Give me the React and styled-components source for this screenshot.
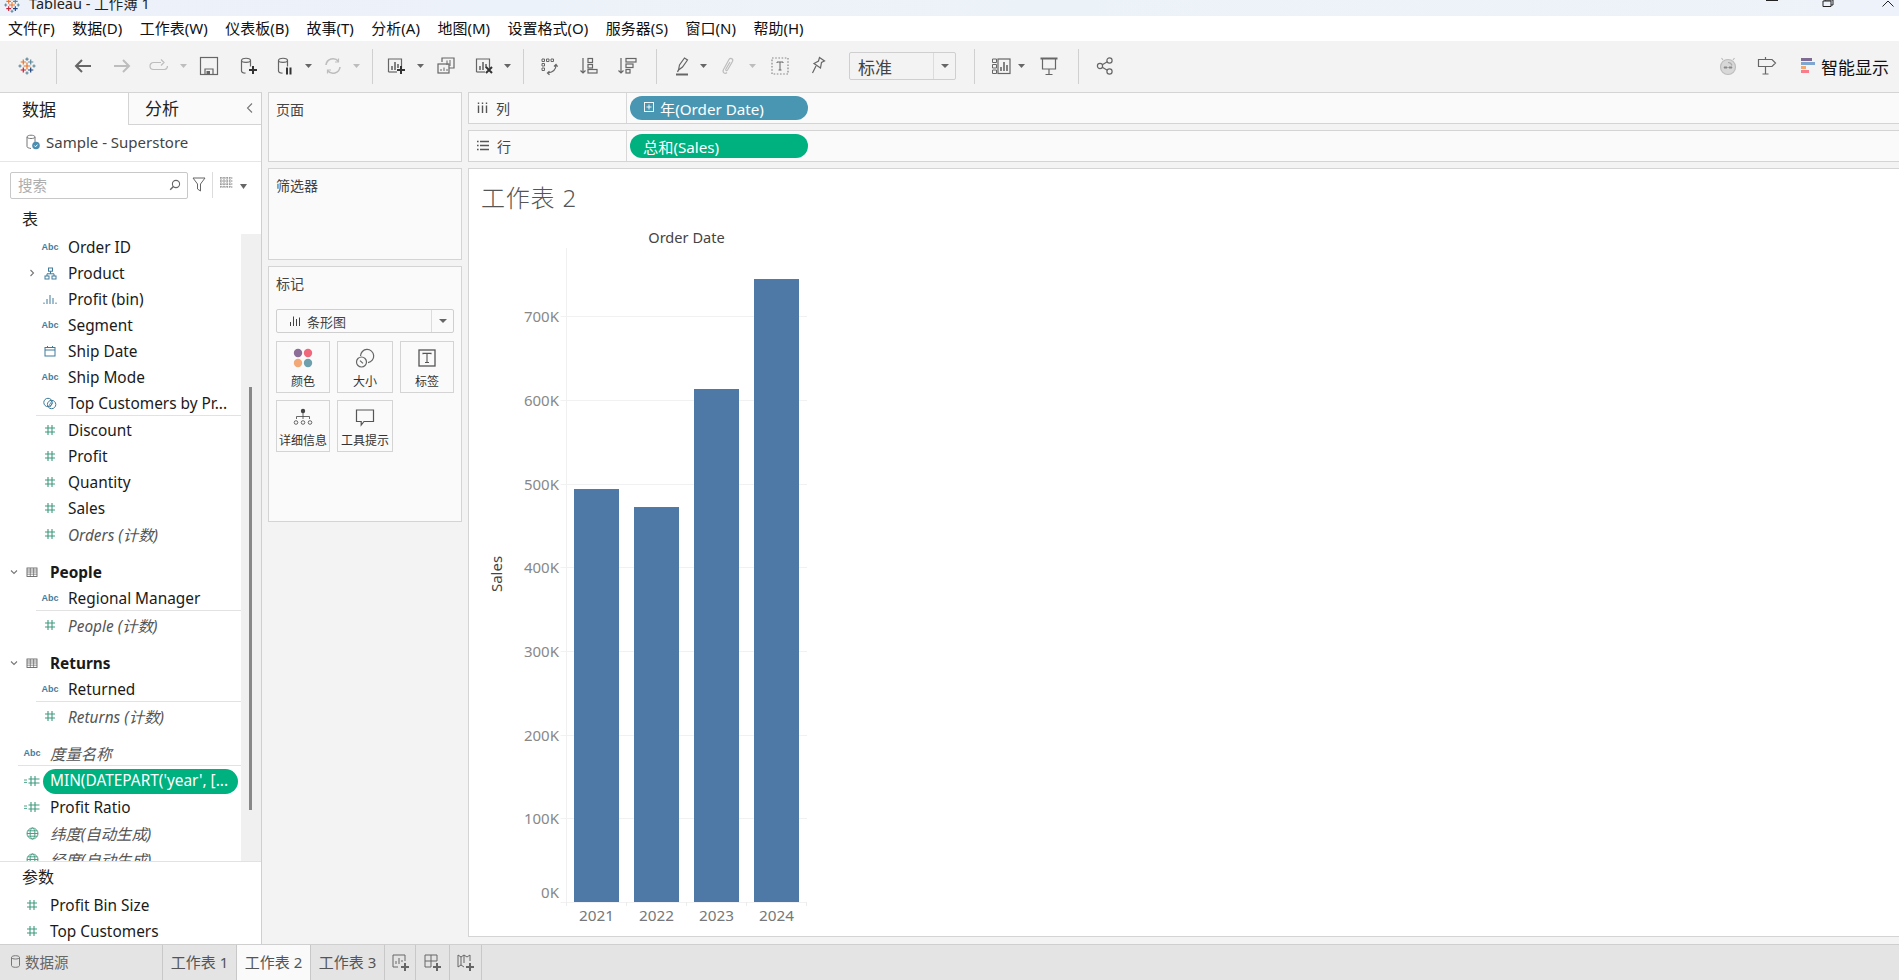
import React from 'react';
import styled, { createGlobalStyle } from 'styled-components';

const GlobalStyle = createGlobalStyle`
  html, body {
    margin: 0;
    padding: 0;
    background: #f3f3f3;
    font-family: "Noto Sans", "Noto Sans CJK SC", sans-serif;
    color: #222;
    overflow: hidden;
  }
  * { box-sizing: border-box; }
`;

const Page = styled.div`
  width: 1899px;
  height: 980px;
  display: flex;
  flex-direction: column;
  overflow: hidden;
`;

/* title + menu */
const TitleBar = styled.div`
  height: 16px;
  flex-shrink: 0;
  display: flex;
  align-items: flex-start;
  overflow: hidden;
  background: linear-gradient(90deg, #edf1fa, #ecf3f8 55%, #eef2fa);
`;

const TitleIcon = styled.svg`
  margin: -4px 0 0 3px;
  flex-shrink: 0;
`;

const TitleText = styled.div`
  margin: -9px 0 0 8px;
  font-size: 14.5px;
  line-height: 24px;
  color: #222;
`;

const WinControls = styled.div`
  margin-left: auto;
  display: flex;
  align-items: flex-start;
  color: #222;
`;

const WinButton = styled.svg`
  display: block;
  margin-left: ${p => p.$gap}px;
  margin-right: ${p => p.$end || 0}px;
`;

const MenuBar = styled.div`
  height: 25px;
  flex-shrink: 0;
  display: flex;
  align-items: center;
  gap: 17.5px;
  padding-left: 8px;
  background: #fff;
`;

const MenuItem = styled.span`
  font-size: 15px;
  line-height: 25px;
  color: #111;
  white-space: nowrap;
`;

/* toolbar */
const Toolbar = styled.div`
  height: 51px;
  flex-shrink: 0;
  display: flex;
  align-items: center;
  padding: 0 10px 1px 17px;
  background: #f3f3f3;
`;

const ToolIcon = styled.svg`
  flex-shrink: 0;
  display: block;
  margin-left: ${p => p.$ml || 0}px;
  fill: none;
  stroke: ${p => (p.$off ? '#bdbdbd' : '#666')};
  stroke-width: 1.2;
`;

const ToolCaret = styled.span`
  flex-shrink: 0;
  width: 7px;
  height: 4px;
  margin-left: ${p => p.$ml}px;
  clip-path: polygon(0 0, 100% 0, 50% 100%);
  background: ${p => (p.$off ? '#bdbdbd' : '#666')};
`;

const ToolSep = styled.span`
  flex-shrink: 0;
  width: 1px;
  height: 35px;
  margin-left: ${p => p.$ml}px;
  background: #d0d0d0;
`;

const DropSelect = styled.div`
  flex-shrink: 0;
  display: flex;
  align-items: stretch;
  width: ${p => p.$w}px;
  height: ${p => p.$h}px;
  margin-left: ${p => p.$ml || 0}px;
  border: 1px solid #cfcfcf;
  border-radius: 2px;
  background: ${p => p.$bg || '#f3f3f3'};
`;

const DropLabel = styled.div`
  flex: 1;
  display: flex;
  align-items: center;
  gap: ${p => p.$gap || 0}px;
  padding-left: ${p => p.$pad}px;
  font-size: ${p => p.$size}px;
  color: #444;
`;

const DropArrow = styled.div`
  width: ${p => p.$w}px;
  display: flex;
  align-items: center;
  justify-content: center;
  border-left: 1px solid #dcdcdc;
  &::after {
    content: '';
    border-left: 4px solid transparent;
    border-right: 4px solid transparent;
    border-top: 4.5px solid #666;
  }
`;

const ShowMeBars = styled.svg`
  margin-left: 24px;
  flex-shrink: 0;
`;

const ShowMeLabel = styled.span`
  margin-left: 6px;
  font-size: 17px;
  color: #111;
  white-space: nowrap;
`;

const ToolSpacer = styled.span`
  margin-left: auto;
`;

/* main area */
const Main = styled.div`
  flex: 1;
  min-height: 0;
  display: flex;
  background: #f3f3f3;
`;

const Sidebar = styled.aside`
  width: 262px;
  flex-shrink: 0;
  display: flex;
  flex-direction: column;
  background: #fff;
  border-top: 1px solid #d4d4d4;
  border-right: 1px solid #cfcfcf;
`;

const SideTabs = styled.div`
  height: 32px;
  flex-shrink: 0;
  display: flex;
`;

const SideTab = styled.div`
  display: flex;
  align-items: center;
  font-size: 17px;
  color: #222;
  width: ${p => (p.$active ? '128px' : 'auto')};
  flex: ${p => (p.$active ? 'none' : 1)};
  padding-left: ${p => (p.$active ? 22 : 16)}px;
  padding-bottom: 2px;
  border-left: ${p => (p.$active ? 'none' : '1px solid #d4d4d4')};
  border-bottom: ${p => (p.$active ? 'none' : '1px solid #d4d4d4')};
  background: ${p => (p.$active ? '#fff' : '#fafafa')};
`;

const TabChevron = styled.svg`
  margin-left: auto;
  margin-right: 7px;
`;

const SourceRow = styled.div`
  height: 37px;
  flex-shrink: 0;
  display: flex;
  align-items: center;
  gap: 6px;
  padding: 0 0 2px 26px;
  font-size: 15px;
  color: #444;
  border-bottom: 1px solid #e6e6e6;
`;

const SearchRow = styled.div`
  height: 43px;
  flex-shrink: 0;
  display: flex;
  align-items: flex-start;
  padding: 10px 0 0 10px;
`;

const SearchBox = styled.div`
  width: 178px;
  height: 27px;
  display: flex;
  align-items: center;
  justify-content: space-between;
  padding: 0 6px 2px 7px;
  font-size: 14.5px;
  color: #adadad;
  border: 1px solid #c8c8c8;
  border-radius: 2px;
`;

const SearchTool = styled.svg`
  margin: 5px 0 0 ${p => p.$ml}px;
  flex-shrink: 0;
`;

const SearchDivider = styled.span`
  width: 1px;
  height: 26px;
  margin-left: 6px;
  background: #dcdcdc;
`;

const SearchCaret = styled.span`
  width: 7px;
  height: 5px;
  margin: 12px 0 0 7px;
  clip-path: polygon(0 0, 100% 0, 50% 100%);
  background: #666;
`;

const SectionHeading = styled.div`
  height: ${p => p.$h}px;
  flex-shrink: 0;
  display: flex;
  align-items: center;
  padding: 0 0 ${p => p.$pb || 0}px 22px;
  font-size: 16px;
  color: #222;
`;

const ScrollArea = styled.div`
  flex: 1;
  min-height: 0;
  display: flex;
  overflow: hidden;
`;

const FieldList = styled.div`
  flex: 1;
  min-width: 0;
  overflow: hidden;
`;

const ScrollTrack = styled.div`
  width: 20px;
  flex-shrink: 0;
  display: flex;
  justify-content: center;
  background: #f0f0f0;
`;

const ScrollThumb = styled.div`
  width: 3px;
  height: 423px;
  margin-top: 153px;
  margin-right: 1px;
  background: #888;
`;

const FieldRow = styled.div`
  height: 26px;
  display: flex;
  align-items: center;
  padding-left: ${p => 8 + p.$level * 18}px;
  margin-top: ${p => p.$top || 0}px;
  white-space: nowrap;
`;

const ExpandSlot = styled.span`
  width: 12px;
  flex-shrink: 0;
  display: flex;
  align-items: center;
  justify-content: center;
`;

const IconSlot = styled.span`
  width: 24px;
  flex-shrink: 0;
  display: flex;
  align-items: center;
  justify-content: center;
`;

const AbcMark = styled.span`
  font-family: "Liberation Sans", sans-serif;
  font-size: 9px;
  font-weight: 700;
  color: #467c9c;
`;

const FieldName = styled.span`
  margin-left: 6px;
  font-size: 15.4px;
  color: ${p => (p.$italic ? '#555' : '#1a1a1a')};
  font-style: ${p => (p.$italic ? 'italic' : 'normal')};
  font-weight: ${p => (p.$bold ? 700 : 400)};
`;

const FieldPill = styled.span`
  flex: 1;
  height: 25px;
  display: flex;
  align-items: center;
  margin-right: 3px;
  margin-left: -1px;
  padding: 0 0 1px 7px;
  border-radius: 13px;
  font-size: 15.4px;
  color: #fff;
  background: #00b180;
`;

const FieldDivider = styled.div`
  height: 1px;
  margin: -1px 0 ${p => p.$after}px ${p => p.$left}px;
  background: #e2e2e2;
`;

const ParamsPanel = styled.div`
  height: 83px;
  flex-shrink: 0;
  border-top: 1px solid #e2e2e2;
`;

/* pages / filters / marks */
const CardColumn = styled.div`
  width: 194px;
  flex-shrink: 0;
  margin-left: 6px;
  display: flex;
  flex-direction: column;
  gap: 6px;
`;

const Card = styled.section`
  height: ${p => p.$h}px;
  padding: 7px 7px;
  background: #fafafa;
  border: 1px solid #d4d4d4;
`;

const CardTitle = styled.div`
  font-size: 14px;
  line-height: 20px;
  color: #444;
`;

const MarksType = styled.div`
  margin-top: 15px;
`;

const MarksGrid = styled.div`
  display: grid;
  grid-template-columns: 54px 56px 54px;
  grid-auto-rows: 52px;
  gap: 7px;
  margin-top: 8px;
`;

const MarkButton = styled.div`
  display: flex;
  flex-direction: column;
  align-items: center;
  justify-content: flex-end;
  padding-bottom: 2px;
  gap: 6px;
  font-size: 12px;
  line-height: 16px;
  color: #333;
  white-space: nowrap;
  border: 1px solid #d4d4d4;
  background: #fafafa;
`;

/* shelves + view */
const Workspace = styled.div`
  flex: 1;
  min-width: 0;
  margin-left: 6px;
  display: flex;
  flex-direction: column;
  gap: 6px;
  padding-bottom: 7px;
`;

const Shelf = styled.div`
  height: 32px;
  flex-shrink: 0;
  display: flex;
  align-items: center;
  background: #fafafa;
  border-top: 1px solid #d4d4d4;
  border-bottom: 1px solid #d4d4d4;
  border-left: 1px solid #d4d4d4;
`;

const ShelfLabel = styled.div`
  width: 158px;
  height: 100%;
  flex-shrink: 0;
  display: flex;
  align-items: center;
  gap: 8px;
  padding: 0 0 1px 8px;
  font-size: 14px;
  color: #444;
  border-right: 1px solid #d8d8d8;
`;

const ShelfPill = styled.div`
  width: 178px;
  height: 24px;
  margin-left: 3px;
  display: flex;
  align-items: center;
  gap: 5px;
  padding: 0 0 1px ${p => p.$pad}px;
  font-size: 15.2px;
  color: #fff;
  border-radius: 12px;
  background: ${p => p.$color};
`;

const ViewPanel = styled.div`
  flex: 1;
  min-height: 0;
  background: #fff;
  border-top: 1px solid #d4d4d4;
  border-bottom: 1px solid #d4d4d4;
  border-left: 1px solid #d4d4d4;
`;

const SheetTitle = styled.h1`
  margin: 0;
  height: 56px;
  padding: 12px 0 0 12px;
  font-size: 24px;
  line-height: 34px;
  font-weight: 300;
  letter-spacing: 0.8px;
  color: #555;
`;

const ChartSvg = styled.svg`
  display: block;
  margin-left: 11px;
`;

const ChartLabel = styled.text`
  font-family: "Noto Sans", sans-serif;
  font-size: ${p => p.$size}px;
  fill: ${p => p.$color};
`;

/* sheet tabs */
const BottomBar = styled.div`
  height: 36px;
  flex-shrink: 0;
  display: flex;
  background: #e4e4e4;
  border-top: 1px solid #cfcfcf;
`;

const SourceTab = styled.div`
  width: 163px;
  display: flex;
  align-items: center;
  gap: 5px;
  padding: 0 0 2px 11px;
  font-size: 14.5px;
  color: #666;
  border-right: 1px solid #c8c8c8;
`;

const SheetTab = styled.div`
  width: 74px;
  display: flex;
  align-items: center;
  justify-content: center;
  padding-bottom: 2px;
  font-size: 15px;
  color: #555;
  background: ${p => (p.$active ? '#fafafa' : 'transparent')};
  border-right: 1px solid #c8c8c8;
`;

const NewTab = styled.div`
  width: ${p => p.$w}px;
  display: flex;
  align-items: center;
  justify-content: center;
  border-right: 1px solid #c8c8c8;
`;

/* drawings */
const Tool = ({ ml, off, children }) => (
  <ToolIcon width="20" height="20" viewBox="0 0 20 20" $ml={ml} $off={off}>{children}</ToolIcon>
);

const plus = <path d="M11 16h8M15 12v8" stroke="#333" strokeWidth="2" transform="translate(0 -2)" />;

const logoMarks = [
  [-3.7, -4, 2.6, '#e8762c'], [3.7, -4, 2.6, '#5b879b'], [0, -6.8, 1.6, '#5b879b'],
  [0, 0, 3.4, '#e8762c'], [-7, 0, 1.6, '#5b879b'], [7, 0, 1.6, '#5b879b'],
  [-3.7, 4, 2.6, '#c72037'], [3.7, 4, 2.6, '#1f447e'], [0, 7, 1.6, '#5b879b'],
];

const Logo = () => (
  <g>
    {logoMarks.map(([x, y, r, c], i) => (
      <path key={i} d={`M${10 + x - r} ${10 + y}h${r * 2}M${10 + x} ${10 + y - r}v${r * 2}`} stroke={c} strokeWidth="1.2" fill="none" />
    ))}
  </g>
);

const barsInFrame = (
  <>
    <path d="M2.5 16V3h13v9" />
    <path d="M2.5 16H11" />
    <path d="M6 14V10M9 14V6M12 12V8" strokeWidth="1.6" />
  </>
);

const Cylinder = () => (
  <path d="M3.5 4.5c0-3 9-3 9 0v6M3.5 4.5c0 2.4 9 2.4 9 0M3.5 4.5V15c0 1.3 1.6 2 4 2.2" />
);

const Hash = () => (
  <svg width="12" height="12" viewBox="0 0 12 12" fill="none" stroke="#3f9a7e" strokeWidth="1.1">
    <path d="M4 1v10M8 1v10M1 4h10M1 8h10" />
  </svg>
);

const CalcHash = () => (
  <svg width="16" height="12" viewBox="0 0 16 12" fill="none" stroke="#3f9a7e" strokeWidth="1.1">
    <path d="M7 1v10M11 1v10M4.5 4h11M4.5 8h11" />
    <path d="M0 5h3M0 7.4h3" strokeWidth="0.9" />
  </svg>
);

const TableIcon = () => (
  <svg width="12" height="12" viewBox="0 0 12 12" fill="none" stroke="#666" strokeWidth="0.9">
    <rect x="1" y="2" width="10" height="8.5" />
    <path d="M1 4h10M1 6h10M1 8.2h10M4.3 2v8.5M7.6 2v8.5" strokeWidth="0.7" />
  </svg>
);

const Globe = () => (
  <svg width="13" height="13" viewBox="0 0 13 13" fill="none" stroke="#4c9f86" strokeWidth="1">
    <circle cx="6.5" cy="6.5" r="5.5" />
    <ellipse cx="6.5" cy="6.5" rx="2.4" ry="5.5" />
    <path d="M1 6.5h11M1.8 3.8h9.4M1.8 9.2h9.4" />
  </svg>
);

const Hierarchy = () => (
  <svg width="13" height="13" viewBox="0 0 13 13" fill="none" stroke="#3f7a9a" strokeWidth="1">
    <rect x="4.5" y="1" width="4" height="3.2" />
    <rect x="1" y="9" width="4" height="3" />
    <rect x="8" y="9" width="4" height="3" />
    <path d="M6.5 4.2v2.6M3 9V6.8h7V9" />
  </svg>
);

const BinBars = () => (
  <svg width="14" height="12" viewBox="0 0 14 12" fill="none" stroke="#3f7a9a" strokeWidth="1">
    <path d="M1 11V9.5M4 11V6M7 11V2M10 11V5M13 11V9.5" />
  </svg>
);

const Calendar = () => (
  <svg width="12" height="12" viewBox="0 0 12 12" fill="none" stroke="#3f7a9a" strokeWidth="1">
    <rect x="1" y="2.5" width="10" height="8.5" />
    <path d="M1 5h10M3.5 1v2M8.5 1v2" />
  </svg>
);

const Overlap = () => (
  <svg width="14" height="13" viewBox="0 0 14 13" fill="none" stroke="#3f7a9a" strokeWidth="1">
    <circle cx="5" cy="5.5" r="4.2" />
    <circle cx="8.6" cy="7.5" r="4.2" />
    <path d="M5.5 9.5l3.4-5.6M7 10l2.6-4.4" strokeWidth="0.8" />
  </svg>
);

const Chevron = ({ down }) => (
  <svg width="8" height="8" viewBox="0 0 8 8" fill="none" stroke="#777" strokeWidth="1.1">
    <path d={down ? 'M1 2.5l3 3 3-3' : 'M2.5 1l3 3-3 3'} />
  </svg>
);

const icons = {
  abc: <AbcMark>Abc</AbcMark>,
  hash: <Hash />,
  calc: <CalcHash />,
  globe: <Globe />,
  hier: <Hierarchy />,
  bins: <BinBars />,
  cal: <Calendar />,
  set: <Overlap />,
  table: <TableIcon />,
};

const Field = ({ level = 1, icon, name, italic, bold, top, expand, pill }) => (
  <FieldRow $level={level} $top={top}>
    <ExpandSlot>{expand && <Chevron down={expand === 'down'} />}</ExpandSlot>
    <IconSlot>{icons[icon]}</IconSlot>
    {pill ? <FieldPill>{name}</FieldPill> : <FieldName $italic={italic} $bold={bold}>{name}</FieldName>}
  </FieldRow>
);

const menus = ['文件(F)', '数据(D)', '工作表(W)', '仪表板(B)', '故事(T)', '分析(A)', '地图(M)', '设置格式(O)', '服务器(S)', '窗口(N)', '帮助(H)'];

const markButtons = [
  {
    label: '颜色',
    icon: (
      <svg width="20" height="20" viewBox="0 0 20 20">
        <circle cx="5" cy="5" r="4.2" fill="#8c6d97" />
        <circle cx="15" cy="5" r="4.2" fill="#f0687c" />
        <circle cx="5" cy="15" r="4.2" fill="#f2a877" />
        <circle cx="15" cy="15" r="4.2" fill="#6e9fad" />
      </svg>
    ),
  },
  {
    label: '大小',
    icon: (
      <svg width="20" height="20" viewBox="0 0 20 20" fill="none" stroke="#666" strokeWidth="1.2">
        <path d="M5.5 8A6.6 6.6 0 1 1 13 14.6" />
        <circle cx="6.5" cy="14" r="5" />
        <path d="M5 12.6l3 2.8" />
      </svg>
    ),
  },
  {
    label: '标签',
    icon: (
      <svg width="20" height="20" viewBox="0 0 20 20" fill="none" stroke="#555" strokeWidth="1.3">
        <rect x="2" y="2" width="16" height="16" />
        <path d="M6 6.2V5.4h8v.8M10 5.4v9M8 14.5h4" strokeWidth="1.1" />
      </svg>
    ),
  },
  {
    label: '详细信息',
    icon: (
      <svg width="20" height="20" viewBox="0 0 20 20" fill="#444" stroke="#444" strokeWidth="0.8">
        <circle cx="10" cy="4" r="2.2" stroke="none" />
        <path d="M10 6v6M3.5 12V9.5h13V12" fill="none" />
        <circle cx="3" cy="15.5" r="1.8" fill="none" />
        <circle cx="10" cy="15.5" r="1.8" fill="none" />
        <circle cx="17" cy="15.5" r="1.8" fill="none" />
      </svg>
    ),
  },
  {
    label: '工具提示',
    icon: (
      <svg width="20" height="20" viewBox="0 0 20 20" fill="none" stroke="#555" strokeWidth="1.2">
        <path d="M1.5 3h17v11.5H9L6.2 18v-3.5H1.5z" />
      </svg>
    ),
  },
];

const chart = {
  axisX: 86.5,
  baseY: 677,
  unit: 83.7, // px per 100K
  rows: [
    { year: 2021, sales: 493.4 },
    { year: 2022, sales: 471.9 },
    { year: 2023, sales: 612.9 },
    { year: 2024, sales: 744.3 },
  ],
};

const SalesChart = () => {
  const { axisX, baseY, unit, rows } = chart;
  const ticks = [0, 100, 200, 300, 400, 500, 600, 700];
  return (
    <ChartSvg width="345" height="705" viewBox="0 0 345 705">
      <ChartLabel x="206.5" y="18" textAnchor="middle" $size={14.6} $color="#444">Order Date</ChartLabel>
      <path d={`M${axisX} 23V${baseY + 4}`} stroke="#f0f0f0" fill="none" />
      {ticks.map(t => {
        const y = Math.round(baseY - (t * unit) / 100) + 0.5;
        // the 0K label sits above its line, as in the view
        const labelY = t === 0 ? y - 5 : y + 5;
        return (
          <g key={t}>
            <path d={`M${axisX - 6} ${y}H327`} stroke="#f1f1f1" fill="none" />
            <ChartLabel x="79" y={labelY} textAnchor="end" $size={15} $color="#888">{t}K</ChartLabel>
          </g>
        );
      })}
      {rows.map((r, i) => {
        const h = (r.sales * unit) / 100;
        return (
          <g key={r.year}>
            <rect x={94 + i * 60} y={baseY - h} width="45" height={h} fill="#4e78a6" />
            <path d={`M${axisX + i * 60} ${baseY}v4`} stroke="#ececec" />
            <ChartLabel x={116.5 + i * 60} y={696} textAnchor="middle" $size={15.3} $color="#777">{r.year}</ChartLabel>
          </g>
        );
      })}
      <path d={`M${axisX + 240} ${baseY}v4`} stroke="#ececec" />
      <ChartLabel transform="translate(22 349) rotate(-90)" textAnchor="middle" $size={15} $color="#444">Sales</ChartLabel>
    </ChartSvg>
  );
};

export default function App() {
  return (
    <Page>
      <GlobalStyle />
      <TitleBar>
        <TitleIcon width="18" height="18" viewBox="0 0 20 20"><Logo /></TitleIcon>
        <TitleText>Tableau - 工作簿 1</TitleText>
        <WinControls>
          <WinButton width="12" height="4" viewBox="0 0 12 4" $gap={0}>
            <path d="M0 0.5h12" stroke="#222" fill="none" />
          </WinButton>
          <WinButton width="12" height="7" viewBox="0 0 12 7" $gap={44}>
            <path d="M3 0v1H1v5.5h8V1H3M3 0h8v5H9" stroke="#222" fill="none" />
          </WinButton>
          <WinButton width="12" height="7" viewBox="0 0 12 7" $gap={48} $end={5}>
            <path d="M0.5 6.5L6 1l5.5 5.5" stroke="#222" fill="none" />
          </WinButton>
        </WinControls>
      </TitleBar>

      <MenuBar>
        {menus.map(m => <MenuItem key={m}>{m}</MenuItem>)}
      </MenuBar>

      <Toolbar>
        <ToolIcon width="20" height="20" viewBox="0 0 20 20"><Logo /></ToolIcon>
        <ToolSep $ml={19} />
        <Tool ml={16}><path d="M18 10H3M9 4l-6 6 6 6" strokeWidth="2" /></Tool>
        <Tool ml={19} off><path d="M2 10h15M11 4l6 6-6 6" strokeWidth="2" /></Tool>
        <Tool ml={17} off><path d="M12 6.5H4.5a3.5 3.5 0 0 0 0 7h11a3.5 3.5 0 0 0 3-3.5M12 3.5l3 3-3 3" /></Tool>
        <ToolCaret $ml={11} $off />
        <Tool ml={12}>
          <rect x="1.5" y="1.5" width="17" height="17" />
          <path d="M6 18.5v-5.5h8v5.5" />
          <rect x="7.5" y="15" width="3.5" height="3.5" fill="#666" stroke="none" />
        </Tool>
        <Tool ml={19}><Cylinder />{plus}</Tool>
        <Tool ml={17}>
          <Cylinder />
          <path d="M12 11.5v7M15.5 11.5v7" stroke="#333" strokeWidth="2" />
        </Tool>
        <ToolCaret $ml={10} />
        <Tool ml={11} off>
          <path d="M3 9a7 7 0 0 1 12.5-3.5M17 11a7 7 0 0 1-12.5 3.5" strokeWidth="1.6" />
          <path d="M15.5 2.5v3.5h-3.5M4.5 17.5V14h3.5" />
        </Tool>
        <ToolCaret $ml={10} $off />
        <ToolSep $ml={12} />
        <Tool ml={13}>{barsInFrame}{plus}</Tool>
        <ToolCaret $ml={11} />
        <Tool ml={12}>
          <path d="M6 6V2h12v10h-5" />
          <rect x="2" y="8" width="11" height="9" />
          <path d="M5 15v-2M8 15v-3.5M11 15v-2M11 9V4.5M14 10V4" strokeWidth="1" />
        </Tool>
        <Tool ml={18}>
          {barsInFrame}
          <path d="M12 11l6 6M18 11l-6 6" stroke="#333" strokeWidth="2" />
        </Tool>
        <ToolCaret $ml={10} />
        <ToolSep $ml={12} />
        <Tool ml={15}>
          <path d="M3 3h2.5v2.5H3zM7.5 3H10v2.5H7.5zM12 3h2.5v2.5H12zM3 7.5h2.5V10H3zM3 12h2.5v2.5H3z" strokeWidth="1" />
          <path d="M17 9c0 4-2.5 7-8 8M15 10.5L17 8.5l1.6 2.2M10.5 15.2L8.5 17l2 1.8" />
        </Tool>
        <Tool ml={20}>
          <path d="M4 2v15M1.5 14.5L4 17l2.5-2.5" />
          <rect x="9" y="2.5" width="4.5" height="4" />
          <rect x="9" y="8.5" width="4.5" height="3.5" />
          <rect x="9" y="13.5" width="9" height="3.5" />
        </Tool>
        <Tool ml={18}>
          <path d="M4 2v15M1.5 14.5L4 17l2.5-2.5" />
          <rect x="9" y="2.5" width="10" height="3.5" />
          <rect x="9" y="8" width="7" height="3.5" />
          <rect x="9" y="13.5" width="4" height="3.5" />
        </Tool>
        <ToolSep $ml={19} />
        <Tool ml={16}>
          <path d="M5.5 14l1-5 5-7 3 2-5 7z" />
          <path d="M3 18.5h12" strokeWidth="2" />
          <path d="M5.5 14l-1 2" />
        </Tool>
        <ToolCaret $ml={7} />
        <Tool ml={12} off>
          <path d="M8 16.5c-2 2-5 0-3.5-3L10 3.5c1.2-2 4.5-.8 3.6 1.8L8.5 14c-.8 1.2-2.2.4-1.7-.8L11 6" />
        </Tool>
        <ToolCaret $ml={10} $off />
        <Tool ml={14}>
          <rect x="2" y="2" width="16" height="16" strokeDasharray="1.6 1.6" stroke="#888" />
          <path d="M7 7V6h6v1M10 6v8M8.5 14h3" strokeWidth="1" />
        </Tool>
        <Tool ml={18}>
          <path d="M11.5 1.5l5 3.5-3 1.5-1 5.5-6.5-4.5 4.5-2.5zM8 10l-3.5 7" />
        </Tool>
        <DropSelect $w={107} $h={28} $ml={21}>
          <DropLabel $pad={8} $size={17}>标准</DropLabel>
          <DropArrow $w={22} />
        </DropSelect>
        <ToolSep $ml={18} />
        <Tool ml={16}>
          <path d="M1.5 3h4v3.5h-4zM1.5 8.5h4V12h-4zM1.5 14h4v3.5h-4z" strokeWidth="1" />
          <rect x="7" y="3" width="12" height="14.5" />
          <path d="M10 15v-4M13 15V6M16 15V9" strokeWidth="1.6" />
        </Tool>
        <ToolCaret $ml={7} />
        <Tool ml={14}>
          <path d="M1.5 2.5h17" strokeWidth="2" />
          <path d="M3.5 3v10h13V3M10 13v5M6.5 18.5h7" />
        </Tool>
        <ToolSep $ml={19} />
        <Tool ml={16}>
          <circle cx="5" cy="10" r="2.6" />
          <circle cx="14.5" cy="4.5" r="2.6" />
          <circle cx="14.5" cy="15.5" r="2.6" />
          <path d="M7.3 8.7l5-2.9M7.3 11.3l5 2.9" />
        </Tool>
        <ToolSpacer />
        <Tool off>
          <circle cx="10" cy="11" r="7.5" fill="#d8d8d8" />
          <path d="M5 4L3.5 2M15 4l1.5-2" />
          <path d="M5.5 11.5h9M10 6.5a4 4 0 0 1 4 3" stroke="#aaa" />
          <rect x="6" y="10.5" width="3" height="2" fill="#888" stroke="none" />
          <rect x="11" y="10.5" width="3" height="2" fill="#888" stroke="none" />
        </Tool>
        <Tool ml={19}>
          <path d="M1.5 3.5H15l3.5 3.5-3.5 3.5H1.5zM8.5 1v2.5M8.5 10.5V18M5.5 18h6" />
        </Tool>
        <ShowMeBars width="14" height="16" viewBox="0 0 14 16">
          <rect x="0" y="0" width="11" height="3" fill="#7f6a93" />
          <rect x="0" y="4" width="14" height="3" fill="#7fa6cf" />
          <rect x="0" y="8" width="5" height="3" fill="#f4a66c" />
          <rect x="0" y="12" width="8" height="3" fill="#f87c8c" />
        </ShowMeBars>
        <ShowMeLabel>智能显示</ShowMeLabel>
      </Toolbar>

      <Main>
        <Sidebar>
          <SideTabs>
            <SideTab $active>数据</SideTab>
            <SideTab>
              分析
              <TabChevron width="8" height="12" viewBox="0 0 8 12" fill="none" stroke="#777" strokeWidth="1.1">
                <path d="M6 1.5L1.5 6 6 10.5" />
              </TabChevron>
            </SideTab>
          </SideTabs>
          <SourceRow>
            <svg width="14" height="16" viewBox="0 0 14 16" fill="none" stroke="#777" strokeWidth="1">
              <path d="M1 3c0-2.4 8-2.4 8 0v5M1 3c0 2 8 2 8 0M1 3v9.5C1 13.6 2.5 14 5 14.5" />
              <circle cx="10" cy="11.5" r="3.8" fill="#4a8db0" stroke="none" />
              <path d="M8.3 11.5l1.2 1.3 2-2.2" stroke="#fff" />
            </svg>
            Sample - Superstore
          </SourceRow>
          <SearchRow>
            <SearchBox>
              搜索
              <svg width="12" height="12" viewBox="0 0 12 12" fill="none" stroke="#666" strokeWidth="1.1">
                <circle cx="7" cy="5" r="3.6" />
                <path d="M4.4 7.6L1.2 10.8" strokeWidth="1.4" />
              </svg>
            </SearchBox>
            <SearchTool width="14" height="15" viewBox="0 0 14 15" fill="none" stroke="#666" strokeWidth="1" $ml={4}>
              <path d="M1 1h12L8.5 7v7l-3-2V7z" />
            </SearchTool>
            <SearchDivider />
            <SearchTool width="13" height="12" viewBox="0 0 13 12" fill="none" stroke="#666" strokeWidth="0.8" $ml={7}>
              <path d="M0 1h13M0 4h13M0 7h13M0 10h13M1 0v11M4 0v11M7 0v11M10 0v11" strokeDasharray="1.4 0.8" />
            </SearchTool>
            <SearchCaret />
          </SearchRow>
          <SectionHeading $h={29} $pb={4}>表</SectionHeading>
          <ScrollArea>
            <FieldList>
              <Field icon="abc" name="Order ID" />
              <Field icon="hier" name="Product" expand="right" />
              <Field icon="bins" name="Profit (bin)" />
              <Field icon="abc" name="Segment" />
              <Field icon="cal" name="Ship Date" />
              <Field icon="abc" name="Ship Mode" />
              <Field icon="set" name="Top Customers by Pr..." />
              <FieldDivider $left={36} $after={1} />
              <Field icon="hash" name="Discount" />
              <Field icon="hash" name="Profit" />
              <Field icon="hash" name="Quantity" />
              <Field icon="hash" name="Sales" />
              <Field icon="hash" name="Orders (计数)" italic />

              <Field level={0} icon="table" name="People" bold expand="down" top={12} />
              <Field icon="abc" name="Regional Manager" />
              <FieldDivider $left={36} $after={1} />
              <Field icon="hash" name="People (计数)" italic />

              <Field level={0} icon="table" name="Returns" bold expand="down" top={12} />
              <Field icon="abc" name="Returned" />
              <FieldDivider $left={36} $after={1} />
              <Field icon="hash" name="Returns (计数)" italic />

              <Field level={0} icon="abc" name="度量名称" italic top={11} />
              <FieldDivider $left={18} $after={2} />
              <Field level={0} icon="calc" name="MIN(DATEPART('year', [..." pill />
              <Field level={0} icon="calc" name="Profit Ratio" />
              <Field level={0} icon="globe" name="纬度(自动生成)" italic />
              <Field level={0} icon="globe" name="经度(自动生成)" italic />
            </FieldList>
            <ScrollTrack><ScrollThumb /></ScrollTrack>
          </ScrollArea>
          <ParamsPanel>
            <SectionHeading $h={30} $pb={2}>参数</SectionHeading>
            <Field level={0} icon="hash" name="Profit Bin Size" />
            <Field level={0} icon="hash" name="Top Customers" />
          </ParamsPanel>
        </Sidebar>

        <CardColumn>
          <Card $h={70}><CardTitle>页面</CardTitle></Card>
          <Card $h={92}><CardTitle>筛选器</CardTitle></Card>
          <Card $h={256}>
            <CardTitle>标记</CardTitle>
            <MarksType>
              <DropSelect $w={178} $h={24} $bg="#fafafa">
                <DropLabel $pad={12} $size={13} $gap={6}>
                  <svg width="12" height="12" viewBox="0 0 12 12" fill="none" stroke="#444" strokeWidth="1">
                    <path d="M1.5 11V7M4.5 11V1.5M7.5 11V4M10.5 11V2.5" />
                  </svg>
                  条形图
                </DropLabel>
                <DropArrow $w={22} />
              </DropSelect>
            </MarksType>
            <MarksGrid>
              {markButtons.map(b => (
                <MarkButton key={b.label}>{b.icon}{b.label}</MarkButton>
              ))}
            </MarksGrid>
          </Card>
        </CardColumn>

        <Workspace>
          <Shelf>
            <ShelfLabel>
              <svg width="11" height="11" viewBox="0 0 11 11" fill="none" stroke="#555" strokeWidth="1.4">
                <path d="M1.5 3.5V11M5.5 3.5V11M9.5 3.5V11M1.5 0.5v1.5M5.5 0.5v1.5M9.5 0.5v1.5" />
              </svg>
              列
            </ShelfLabel>
            <ShelfPill $color="#4996b2" $pad={14}>
              <svg width="11" height="11" viewBox="0 0 11 11" fill="none" stroke="#fff" strokeWidth="0.9">
                <rect x="0.5" y="0.5" width="9" height="9" />
                <path d="M2.5 5h5M5 2.5v5" />
              </svg>
              年(Order Date)
            </ShelfPill>
          </Shelf>
          <Shelf>
            <ShelfLabel>
              <svg width="12" height="11" viewBox="0 0 12 11" fill="none" stroke="#555" strokeWidth="1.4">
                <path d="M0 1.5h1.6M3 1.5h9M0 5.5h1.6M3 5.5h9M0 9.5h1.6M3 9.5h9" />
              </svg>
              行
            </ShelfLabel>
            <ShelfPill $color="#00b180" $pad={13}>总和(Sales)</ShelfPill>
          </Shelf>
          <ViewPanel>
            <SheetTitle>工作表 2</SheetTitle>
            <SalesChart />
          </ViewPanel>
        </Workspace>
      </Main>

      <BottomBar>
        <SourceTab>
          <svg width="9" height="13" viewBox="0 0 9 13" fill="none" stroke="#777" strokeWidth="1">
            <path d="M0.5 2.5c0-2.4 8-2.4 8 0V10.5c0 2.4-8 2.4-8 0zM0.5 2.5c0 2 8 2 8 0" />
          </svg>
          数据源
        </SourceTab>
        <SheetTab>工作表 1</SheetTab>
        <SheetTab $active>工作表 2</SheetTab>
        <SheetTab>工作表 3</SheetTab>
        <NewTab $w={31}>
          <svg width="17" height="17" viewBox="0 0 17 17" fill="none" stroke="#666" strokeWidth="1">
            <path d="M6 13H1V1h12v6M4 10V7M7 10V4M10 8V6" />
            <path d="M9 13h8M13 9v8" strokeWidth="2" />
          </svg>
        </NewTab>
        <NewTab $w={34}>
          <svg width="17" height="17" viewBox="0 0 17 17" fill="none" stroke="#666" strokeWidth="1">
            <path d="M7 13H1V1h12v6M1 7h12M7 1v12" />
            <path d="M9 13h8M13 9v8" strokeWidth="2" />
          </svg>
        </NewTab>
        <NewTab $w={32}>
          <svg width="17" height="17" viewBox="0 0 17 17" fill="none" stroke="#666" strokeWidth="1">
            <path d="M7 13l-3-2-3 2V1l3 2 3-2 3 2 3-2v6M4 3v8M7 1v8" />
            <path d="M9 13h8M13 9v8" strokeWidth="2" />
          </svg>
        </NewTab>
      </BottomBar>
    </Page>
  );
}
